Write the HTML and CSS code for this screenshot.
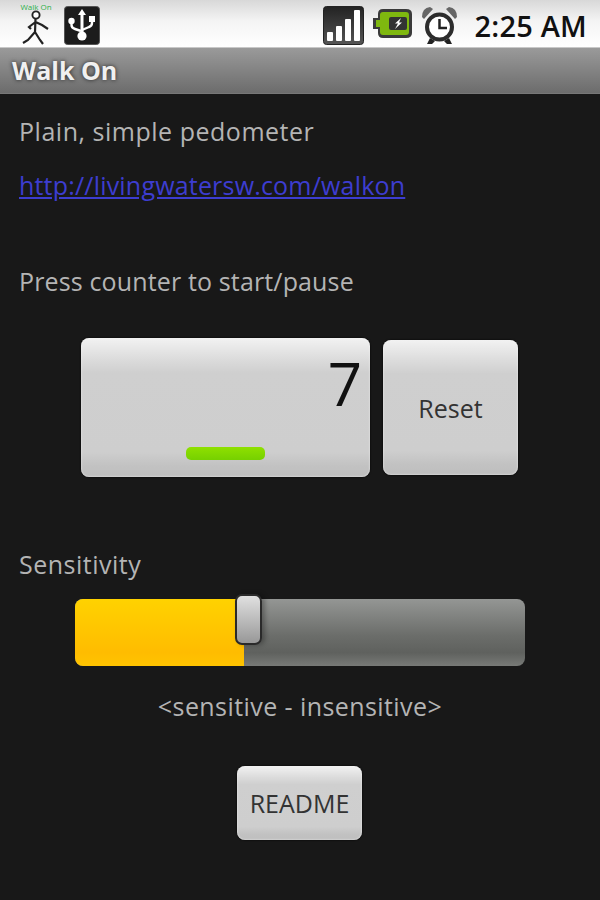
FILE: index.html
```html
<!DOCTYPE html>
<html lang="en">
  <head>
    <meta charset="UTF-8" />
    <meta name="viewport" content="width=device-width, initial-scale=1.0" />
    <title>Walk On</title>
    <link rel="stylesheet" href="styles.css">
  </head>
  <body>
    <div class="status-bar">
      <div class="status-left">
        <div class="walker">
          <span class="walker-label">Walk On</span>
          <svg class="walker-figure" width="30" height="36" viewBox="0 0 30 36">
            <circle cx="15" cy="5" r="3.6" fill="#fff" stroke="#222" stroke-width="1.9" />
            <path d="M14.500 9 L14 22 M14.500 12 L8 17 L10 19 M14.500 12 L21 15 L27 19 M14 22 L7 30 L2 33 M14 22 L19 30 L22 34" fill="none" stroke="#222" stroke-width="2.200" />
          </svg>
        </div>
        <svg class="status-icon" width="36" height="39" viewBox="0 0 36 39">
          <rect x="0.500" y="0.500" width="35" height="38" rx="3" fill="#1c1c1c" stroke="#555" />
          <path d="M18 3 L22 9 L19.500 9 L19.500 27 L16.500 27 L16.500 9 L14 9 Z" fill="#fff" />
          <path d="M7.500 16 V19 Q7.500 22 11 23 L17 25 M28 13 V17 Q28 20 25 21 L18 24" fill="none" stroke="#fff" stroke-width="2.400" />
          <circle cx="7.500" cy="15" r="3.200" fill="#fff" />
          <rect x="25" y="10" width="6" height="6" fill="#fff" />
          <circle cx="18" cy="30" r="4.600" fill="#fff" />
        </svg>
      </div>
      <div class="status-right">
        <svg class="status-icon" width="41" height="39" viewBox="0 0 41 39">
          <defs>
            <linearGradient id="signal-bg" x1="0" y1="0" x2="0" y2="1">
              <stop offset="0" stop-color="#222" />
              <stop offset="1" stop-color="#555" />
            </linearGradient>
          </defs>
          <rect x="0.500" y="0.500" width="40" height="38" rx="3" fill="url(#signal-bg)" stroke="#222" />
          <rect x="4" y="26" width="6" height="9" rx="1" fill="#fff" />
          <rect x="13" y="20" width="6" height="15" rx="1" fill="#fff" />
          <rect x="22" y="13" width="6" height="22" rx="1" fill="#fff" />
          <rect x="31" y="4" width="6" height="31" rx="1" fill="#fff" />
        </svg>
        <svg class="status-icon battery-icon" width="39" height="29" viewBox="0 0 39 29">
          <path d="M5 9 V5 Q5 0 10 0 H33 Q39 0 39 5 V24 Q39 29 33 29 H10 Q5 29 5 24 V20 H0 V9 Z" fill="#3a3a3a" />
          <path d="M7 11 V6 Q7 3 10 3 H33 Q36 3 36 6 V23 Q36 26 33 26 H10 Q7 26 7 23 V18 H3 V11 Z" fill="#7fb80f" />
          <rect x="16" y="8" width="18" height="13" rx="2" fill="#333" />
          <path d="M28 9 L22 14.500 H25 L22 20 L29 13.500 H26 Z" fill="#fff" />
        </svg>
        <svg class="status-icon" width="37" height="39" viewBox="0 0 37 39">
          <path d="M1 11 Q1 2 9 1 L12 3 L3 13 Z M36 11 Q36 2 28 1 L25 3 L34 13 Z" fill="#666" />
          <path d="M9 32 L6 38 H11 L14 35 Z M28 32 L31 38 H26 L23 35 Z" fill="#222" />
          <circle cx="18.500" cy="21" r="12.500" fill="#fff" stroke="#2c2c2c" stroke-width="4" />
          <path d="M18.500 13 V22 H26" fill="none" stroke="#222" stroke-width="2.500" />
        </svg>
        <span class="clock">2:25 AM</span>
      </div>
    </div>
    <div class="title-bar">Walk On</div>
    <div class="content">
      <p class="line tagline">Plain, simple pedometer</p>
      <a class="line site-link" href="#">http://livingwatersw.com/walkon</a>
      <p class="line press-hint">Press counter to start/pause</p>
      <div class="counter-row">
        <div class="btn counter">
          <span class="count">7</span>
          <span class="led"></span>
        </div>
        <div class="btn reset">Reset</div>
      </div>
      <p class="line sensitivity">Sensitivity</p>
      <div class="slider">
        <div class="slider-fill"></div>
        <div class="slider-thumb"></div>
      </div>
      <p class="line range-label">&lt;sensitive - insensitive&gt;</p>
      <div class="btn readme">README</div>
    </div>
  </body>
</html>
```

FILE: styles.css
```css
html,
body {
  height: 100%;
  margin: 0;
  padding: 0;
}
body {
  font-family: 'Open Sans', 'Noto Sans', sans-serif;
  background: #181818;
  overflow: hidden;
}
.status-bar {
  display: flex;
  justify-content: space-between;
  align-items: center;
  box-sizing: border-box;
  height: 47px;
  padding: 3px 13px 0 21px;
  background: linear-gradient(#d8d8d8, #f4f4f4 45%, #ffffff);
}
.status-left,
.status-right {
  display: flex;
  align-items: center;
}
.status-left {
  gap: 13px;
}
.status-right {
  gap: 9px;
}
.status-icon {
  display: block;
}
.walker {
  display: flex;
  flex-direction: column;
  align-items: center;
  width: 30px;
}
.walker-label {
  font-size: 8px;
  line-height: 6px;
  white-space: nowrap;
  color: #2fb04a;
}
.walker-figure {
  display: block;
  height: 36px;
}
.battery-icon {
  margin-top: -3px;
}
.clock {
  font-size: 29px;
  font-weight: 600;
  letter-spacing: 0.2px;
  color: #111;
  margin-left: 7px;
  white-space: nowrap;
}
.title-bar {
  box-sizing: border-box;
  height: 47px;
  padding-left: 12px;
  line-height: 44px;
  font-size: 25px;
  font-weight: 700;
  color: #f0f0f0;
  text-shadow: 0 0 4px #222;
  background: linear-gradient(#9a9a9a, #6c6c6c);
  border-top: 1px solid #c8c8c8;
  border-bottom: 1px solid #777;
}
.content {
  display: flex;
  flex-direction: column;
  padding-left: 19px;
}
.line {
  margin: 0;
  font-size: 25px;
  line-height: 34px;
  color: #b4b4b4;
  white-space: nowrap;
}
.tagline {
  margin-top: 20px;
  letter-spacing: 0.52px;
}
.site-link {
  align-self: flex-start;
  margin-top: 20px;
  color: #3d3dd0;
  letter-spacing: 0.19px;
}
.press-hint {
  margin-top: 62px;
  letter-spacing: 0.14px;
}
.counter-row {
  display: flex;
  align-items: center;
  gap: 13px;
  margin: 40px 0 0 62px;
}
.btn {
  box-sizing: border-box;
  display: flex;
  align-items: center;
  justify-content: center;
  border-radius: 8px;
  color: #333;
  font-size: 25px;
  background: linear-gradient(#f2f2f2, #dcdcdc 15%, #cfcfcf 25%, #cecece 82%, #c2c2c2 92%, #bebebe);
  box-shadow: 0 0 2px #000, inset 0 0 2px #f4f4f4;
}
.counter {
  position: relative;
  width: 289px;
  height: 139px;
}
.count {
  position: absolute;
  top: 5px;
  right: 8px;
  font-size: 60px;
  line-height: 80px;
  color: #111;
}
.led {
  position: absolute;
  left: 105px;
  bottom: 17px;
  width: 79px;
  height: 13px;
  border-radius: 5px;
  background: linear-gradient(#8fe000, #76d000);
}
.reset {
  width: 135px;
  height: 135px;
}
.sensitivity {
  margin-top: 70px;
  letter-spacing: 0.5px;
}
.slider {
  position: relative;
  width: 450px;
  height: 67px;
  margin: 18px 0 0 56px;
  border-radius: 8px;
  background: linear-gradient(#949694, #6b6d6a 55%, #5f615e 80%, #787a77);
}
.slider-fill {
  width: 169px;
  height: 100%;
  border-radius: 8px 0 0 8px;
  background: linear-gradient(#ffd200, #ffbc00 80%, #ffc400);
}
.slider-thumb {
  position: absolute;
  top: -5px;
  left: 160px;
  box-sizing: border-box;
  width: 27px;
  height: 51px;
  border: 2px solid #2a2a2a;
  border-radius: 7px;
  background: linear-gradient(#e0e0e0, #989898);
  box-shadow: 3px 0 5px rgba(0, 0, 0, 0.3);
}
.range-label {
  align-self: center;
  margin: 23px 0 0 -19px;
  letter-spacing: 0.42px;
}
.readme {
  align-self: center;
  width: 125px;
  height: 74px;
  margin: 43px 0 0 -20px;
}
```
